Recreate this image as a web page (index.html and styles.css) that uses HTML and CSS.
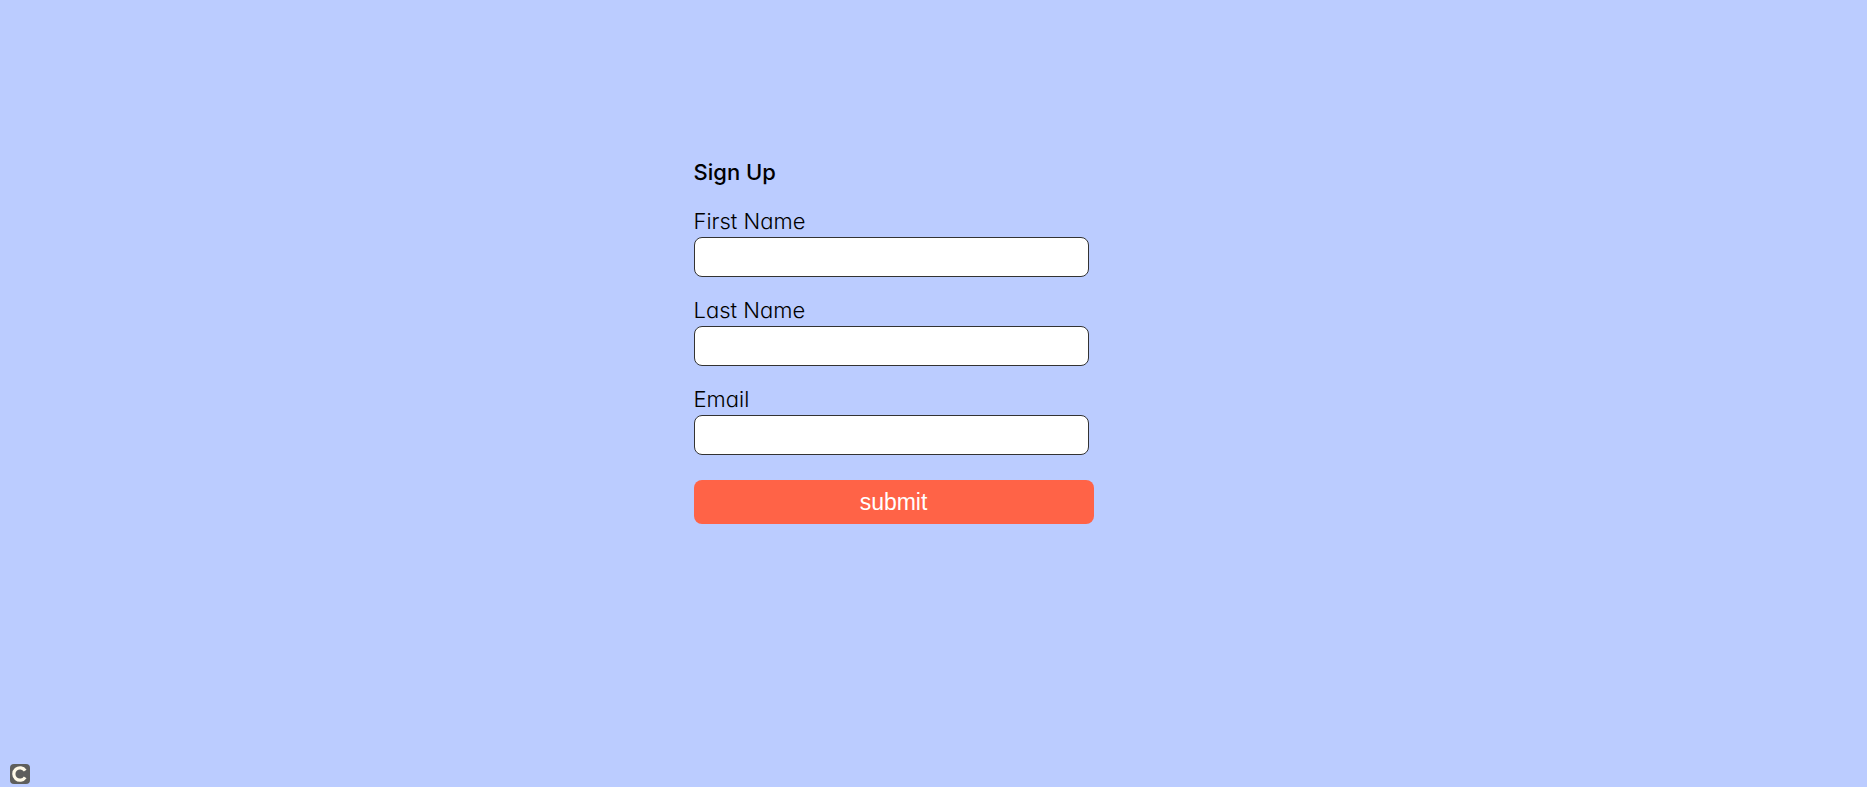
FILE: index.html
```html
<!DOCTYPE html>
<html lang="en">
<head>
<meta charset="utf-8">
<meta name="viewport" content="width=device-width, initial-scale=1">
<title>Sign Up</title>
<link rel="stylesheet" href="styles.css">
</head>
<body>
<main class="signup">
  <h1 class="signup-title">Sign Up</h1>
  <form class="signup-form">
    <div class="field">
      <label class="field-label" for="first-name">First Name</label>
      <input class="field-input" id="first-name" type="text">
    </div>
    <div class="field">
      <label class="field-label" for="last-name">Last Name</label>
      <input class="field-input" id="last-name" type="text">
    </div>
    <div class="field">
      <label class="field-label" for="email">Email</label>
      <input class="field-input" id="email" type="email">
    </div>
    <button class="submit" type="submit">submit</button>
  </form>
</main>
<svg class="badge" viewBox="0 0 20 20" aria-hidden="true">
  <rect width="20" height="20" rx="4" fill="#5e5e5c"/>
  <path d="M15.2 6.6A6.2 6.2 0 1 0 15.2 13.4" fill="none" stroke="#fff9e6" stroke-width="3.2"/>
</svg>
</body>
</html>
```

FILE: styles.css
```css
body {
  margin: 0;
  background: #bbccff;
  color: #000;
  font-family: Inter, "Liberation Sans", sans-serif;
  font-feature-settings: "cv11";
  font-size: 22px;
  line-height: 27px;
}

.signup {
  box-sizing: border-box;
  max-width: 480px;
  margin: 0 auto;
  padding: 159px 80px 40px 0;
}

.signup-title {
  margin: 0 0 22px;
  font-size: 22px;
  font-weight: 500;
}

.signup-form {
  display: flex;
  flex-direction: column;
}

.field {
  display: flex;
  flex-direction: column;
  gap: 2px;
  margin: 0 5px 20px 0;
}

.field-label {
  font-weight: 300;
}

.field-input {
  box-sizing: border-box;
  width: 100%;
  height: 40px;
  padding: 0 10px;
  border: 1px solid #333;
  border-radius: 8px;
  background: #fff;
  font: inherit;
}

.submit {
  height: 44px;
  margin-top: 5px;
  border: 0;
  border-radius: 8px;
  background: #ff6347;
  color: #fff;
  font-family: "Liberation Sans", Arial, sans-serif;
  font-size: 23px;
}

.badge {
  position: fixed;
  bottom: 3px;
  left: 10px;
  width: 20px;
  height: 20px;
}
```
